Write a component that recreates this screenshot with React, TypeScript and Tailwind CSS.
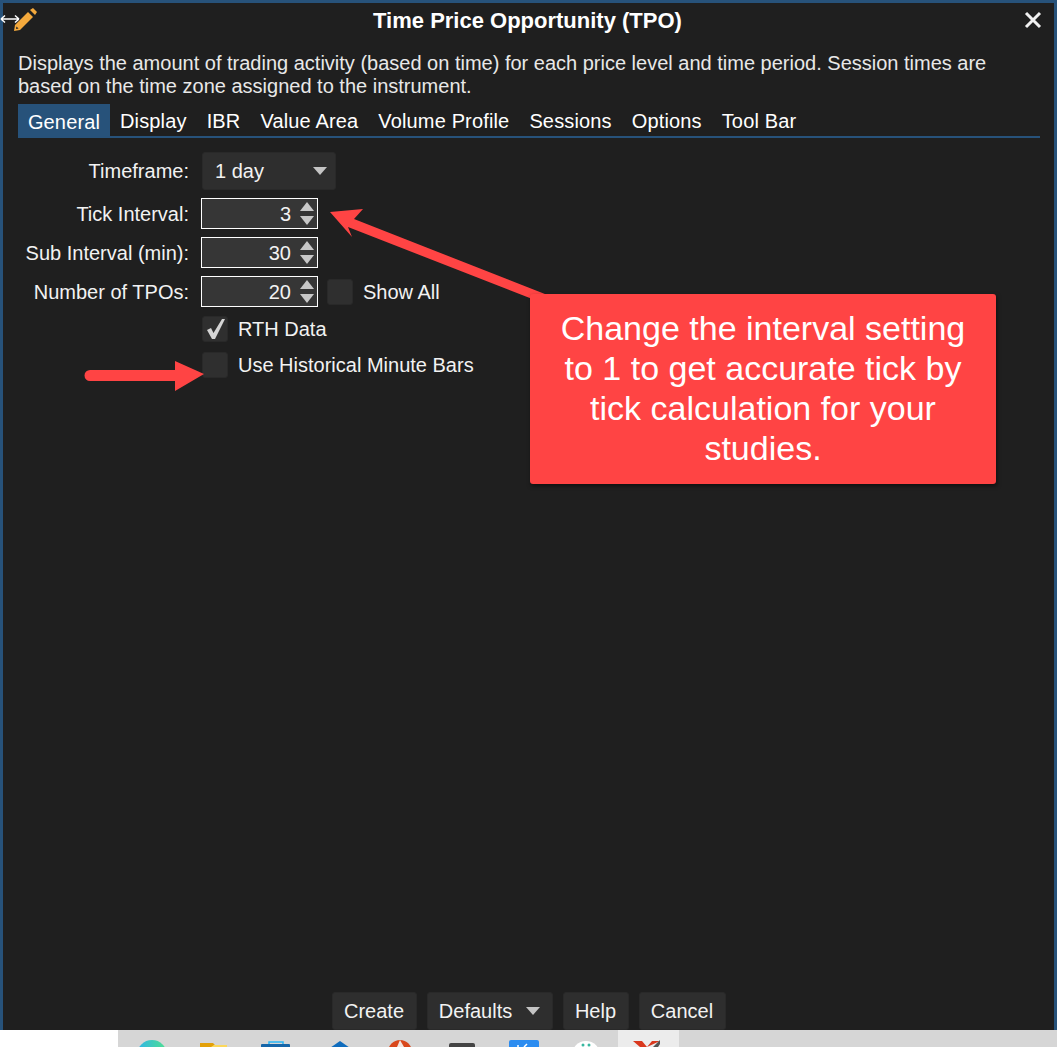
const font = "font-['Liberation_Sans',Arial,sans-serif]";

function Updown() {
  return (
    <div className="flex flex-col gap-[5px]">
      <div className="w-0 h-0 border-x-[7.5px] border-x-transparent border-b-[9px] border-b-[#c8c8c8]" />
      <div className="w-0 h-0 border-x-[7.5px] border-x-transparent border-t-[9px] border-t-[#c8c8c8]" />
    </div>
  );
}

function Caret() {
  return <div className="w-0 h-0 border-x-[7.5px] border-x-transparent border-t-[8px] border-t-[#c4c4c4]" />;
}

function Spinner({ value, label }: { value: string; label: string }) {
  return (
    <div className="flex items-center h-[31px]">
      <div className="w-[198px] pr-[12px] pt-[2px] text-right text-[#f2f2f2]">{label}</div>
      <div className="w-[117px] h-[31px] border border-white bg-[#363636] flex items-center justify-end pr-[3px]">
        <span className="text-[#f2f2f2] mr-[9px] pt-[2px]">{value}</span>
        <Updown />
      </div>
    </div>
  );
}

function Check({ checked, label }: { checked?: boolean; label: string }) {
  return (
    <div className="flex items-center gap-[10px] h-[26px]">
      <div className="w-[26px] h-[26px] rounded-[3px] border border-[#292929] bg-[#2f2f2f] flex items-center justify-center">
        {checked && (
          <svg width="22" height="24" viewBox="0 0 22 24">
            <path d="M3 13 L7 11 L9.5 16 L18 2 L21 2 L11 22 L8 22 Z" fill="#d4d4d4" />
          </svg>
        )}
      </div>
      <span className="text-[#f2f2f2]">{label}</span>
    </div>
  );
}

function Btn({ children, w }: { children: React.ReactNode; w: string }) {
  return (
    <div className={`${w} h-[38px] rounded-[3px] border border-[#292929] bg-[#2e2e2e] flex items-center justify-center gap-[14px] text-[#f2f2f2]`}>
      {children}
    </div>
  );
}

const tabs = ["Display", "IBR", "Value Area", "Volume Profile", "Sessions", "Options", "Tool Bar"];

export default function App() {
  return (
    <div className={`${font} w-[1057px] h-[1047px] overflow-hidden bg-white relative text-[20px] leading-[23px]`}>
      <div className="h-[1030px] bg-[#1f1f1f] border-t-[3px] border-x-[3px] border-[#27527a] flex flex-col">
        <div className="h-[34px] flex items-center justify-between pl-[10px] pr-[12px] shrink-0">
          <svg width="24" height="24" viewBox="0 0 24 24">
            <path d="M1 23 L2 17 L15 4 L20 9 L7 22 Z" fill="#f4a93c" />
            <path d="M17 2 L20 0 L24 4 L22 7 Z" fill="#f4a93c" />
            <path d="M3 21 L3.5 18.5 L5.5 20.5 Z" fill="#1f1f1f" />
          </svg>
          <div className="font-bold text-white text-[22px] mr-[6px]">Time Price Opportunity (TPO)</div>
          <svg width="18" height="18" viewBox="0 0 18 18">
            <path d="M2 2 L16 16 M16 2 L2 16" stroke="#f0f0f0" strokeWidth="3" />
          </svg>
        </div>
        <div className="pl-[15px] pr-[13px] pt-[15px] text-[#e8e8e8]">
          Displays the amount of trading activity (based on time) for each price level and time period. Session times are based on the time zone assigned to the instrument.
        </div>
        <div className="ml-[15px] mr-[14px] mt-[6px] border-b-[2px] border-[#27527a] flex h-[34px] text-white tracking-[0.15px]">
          <div className="w-[92px] h-[34px] pt-[2px] bg-[#27527a] flex items-center justify-center">General</div>
          <div className="flex items-center gap-[20px] pl-[10px] pt-[2px]">
            {tabs.map((t) => (
              <span key={t}>{t}</span>
            ))}
          </div>
        </div>
        <div className="flex flex-col mt-[14px]">
          <div className="flex items-center h-[38px] mb-[8px]">
            <div className="w-[186px] text-right text-[#f2f2f2]">Timeframe:</div>
            <div className="ml-[13px] w-[134px] h-[38px] rounded-[3px] border border-[#292929] bg-[#2e2e2e] flex items-center justify-between pl-[12px] pr-[8px] text-[#f2f2f2]">
              1 day
              <Caret />
            </div>
          </div>
          <div className="flex flex-col gap-[8px]">
            <Spinner value="3" label="Tick Interval:" />
            <Spinner value="30" label="Sub Interval (min):" />
            <div className="flex items-center">
              <Spinner value="20" label="Number of TPOs:" />
              <div className="ml-[9px] pt-[1px]">
                <Check label="Show All" />
              </div>
            </div>
          </div>
          <div className="flex flex-col gap-[10px] ml-[199px] mt-[9px]">
            <Check checked label="RTH Data" />
            <Check label="Use Historical Minute Bars" />
          </div>
        </div>
        <div className="mt-auto flex justify-center gap-[10px]">
          <Btn w="w-[85px]">Create</Btn>
          <Btn w="w-[126px]">
            Defaults
            <Caret />
          </Btn>
          <Btn w="w-[66px]">Help</Btn>
          <Btn w="w-[87px]">Cancel</Btn>
        </div>
      </div>

      {/* taskbar, cut off by the bottom of the screenshot */}
      <div className="h-[17px] ml-[118px] bg-[#d6d6d6] relative overflow-hidden">
        <div className="absolute left-[500px] top-0 w-[61px] h-[17px] bg-[#ececec]" />
        <svg className="absolute left-0 top-0" width="561" height="17" viewBox="118 1030 561 17">
          <defs>
            <linearGradient id="edge" x1="0" y1="0" x2="1" y2="0">
              <stop offset="0" stopColor="#2fb5e8" />
              <stop offset="1" stopColor="#4fe08f" />
            </linearGradient>
          </defs>
          <circle cx="152" cy="1055" r="15" fill="url(#edge)" />
          <path d="M200 1047 V1043 H213 L216 1046 H227 V1047 Z" fill="#e3a008" />
          <path d="M211 1047 L214 1045 H227 V1047 Z" fill="#fbd75b" />
          <path d="M269 1044 V1042 H283 V1044" fill="none" stroke="#29b6f6" strokeWidth="1.5" />
          <rect x="261" y="1044" width="29" height="4" rx="1" fill="#1565a8" />
          <path d="M327 1050 L340 1041 L353 1050 Z" fill="#0f6cbd" />
          <circle cx="400" cy="1052" r="12" fill="#d9481c" />
          <path d="M400 1040 L404 1047 H397 Z" fill="#f4e6e0" />
          <rect x="449" y="1043" width="26" height="6" rx="2" fill="#444444" />
          <rect x="509" y="1040" width="30" height="10" rx="2" fill="#2b8cf0" />
          <path d="M518 1047 V1045 M524 1047 L527 1044" stroke="#ffffff" strokeWidth="1.5" />
          <circle cx="586" cy="1055" r="14" fill="#ffffff" />
          <circle cx="583" cy="1045" r="1.5" fill="#39b8a0" />
          <circle cx="589" cy="1045" r="1.5" fill="#39b8a0" />
          <path d="M633 1041 H642 L647 1047 H640 Z M660 1041 H652 L647 1047 Z" fill="#d9381e" />
          <path d="M653 1047 L660 1040 V1044 L658 1047 Z" fill="#555555" />
        </svg>
      </div>

      {/* annotations */}
      <svg className="absolute left-0 top-0 pointer-events-none" width="1057" height="1047" viewBox="0 0 1057 1047">
        <g fill="#ff4444">
          <path d="M330 212 L363 209 L354 219 L550 296 L540 302 L348 227 L352 237 Z" />
          <path d="M90 370 L175 370 L175 361 L204 374 L175 391 L175 381 L90 381 A5.5 5.5 0 0 1 90 370 Z" />
        </g>
        <path d="M1 19 H19 M1 19 L5 15.5 M1 19 L5 22.5 M19 19 L15 15.5 M19 19 L15 22.5" stroke="#ffffff" strokeWidth="1.5" fill="none" />
      </svg>
      <div className="absolute left-[530px] top-[294px] w-[466px] h-[190px] rounded-[3px] bg-[#ff4444] shadow-[1px_2px_4px_rgba(0,0,0,0.5)] text-white text-center text-[34px] leading-[40px] pt-[14px] px-[30px]">
        Change the interval setting to 1 to get accurate tick by tick calculation for your studies.
      </div>
    </div>
  );
}
